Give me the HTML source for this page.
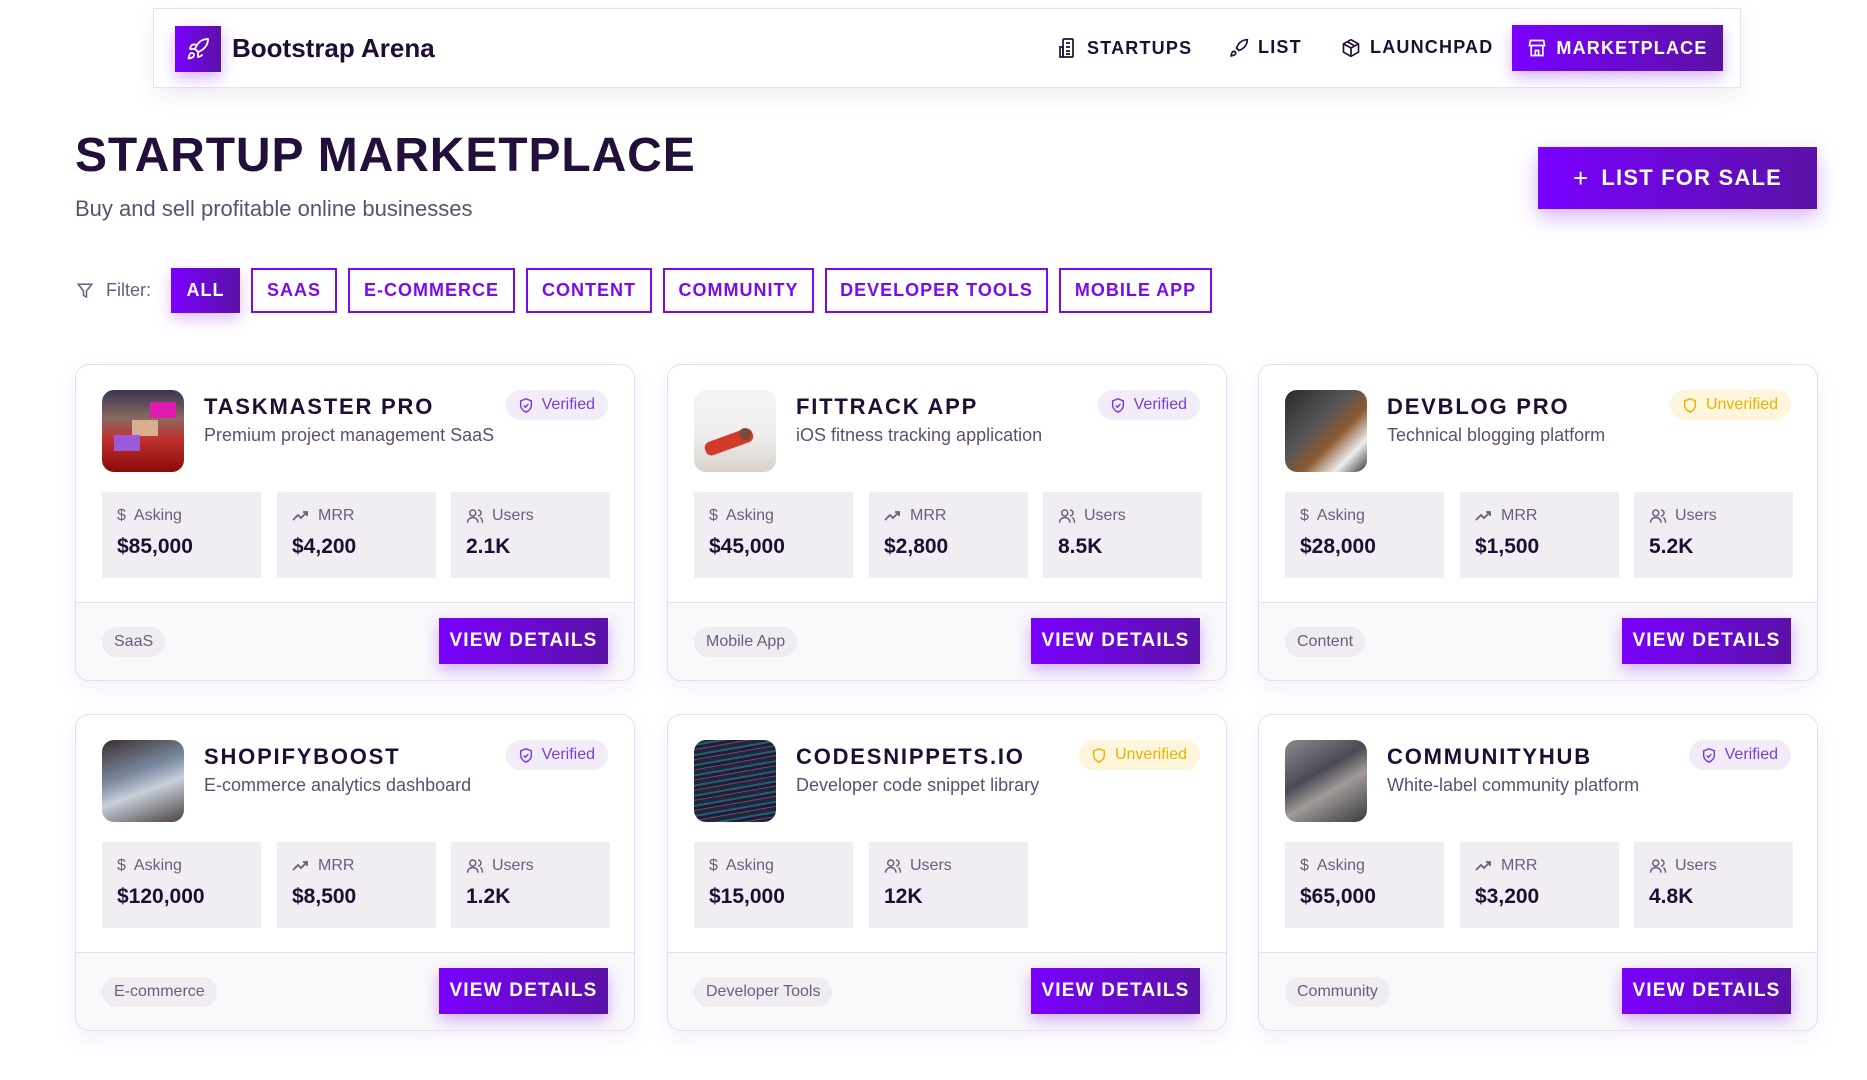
<!DOCTYPE html>
<html><head><meta charset="utf-8"><style>
*{box-sizing:border-box;margin:0;padding:0}
body{width:1867px;height:1080px;overflow:hidden;background:#fff;font-family:"Liberation Sans",Arial,sans-serif;color:#1e0e33;position:relative}
.grad{background:linear-gradient(90deg,#7a00ff,#5a12a6);color:#fff}
.nav{position:absolute;left:153px;top:8px;width:1588px;height:80px;border:1px solid #e6e3ea;background:#fff;box-shadow:0 8px 20px rgba(60,40,90,.08)}
.logo{position:absolute;left:21px;top:17px;width:46px;height:46px;box-shadow:0 6px 14px rgba(122,0,255,.3);display:flex;align-items:center;justify-content:center}
.brand{position:absolute;left:78px;top:24px;font-size:26px;font-weight:600;color:#1e0e33}
.ni{position:absolute;top:28px;font-size:18px;font-weight:700;letter-spacing:1.2px;display:flex;align-items:center;gap:9px;color:#1e0e33}
.mk{position:absolute;left:1358px;top:16px;width:211px;height:46px;display:flex;align-items:center;justify-content:center;gap:9px;font-size:18px;font-weight:700;letter-spacing:1.2px;box-shadow:0 6px 14px rgba(122,0,255,.3)}
h1{position:absolute;left:75px;top:128px;font-size:48px;font-weight:700;letter-spacing:0.9px;color:#22103a}
.sub{position:absolute;left:75px;top:196px;font-size:22px;color:#5e4f70}
.sale{position:absolute;left:1538px;top:147px;width:279px;height:62px;display:flex;align-items:center;justify-content:center;gap:12px;font-size:22px;font-weight:700;letter-spacing:1.2px;box-shadow:0 8px 20px rgba(122,0,255,.3)}
.filter{position:absolute;left:76px;top:268px;height:45px;display:flex;align-items:center;font-size:18px;color:#6b5d7c}
.fb{position:absolute;top:268px;height:45px;border:2px solid #7a0bf0;color:#7a0bf0;font-size:18px;font-weight:700;letter-spacing:1px;display:flex;align-items:center;justify-content:center}
.fb.on{border:none;background:linear-gradient(90deg,#7a00ff,#5a12a6);color:#fff;box-shadow:0 6px 14px rgba(122,0,255,.25)}
.card{position:absolute;width:560px;height:317px;border:1px solid #e4e0ea;border-radius:14px;overflow:hidden;background:#fff;box-shadow:0 8px 22px rgba(122,0,255,.07)}
.img{position:absolute;left:26px;top:25px;width:82px;height:82px;border-radius:12px;overflow:hidden}
.tt{position:absolute;left:128px;top:29px;font-size:22px;font-weight:700;letter-spacing:1.8px;color:#1e0e33}
.ds{position:absolute;left:128px;top:60px;font-size:18px;color:#5e4f70}
.bd{position:absolute;right:26px;top:25px;height:30px;border-radius:15px;padding:0 13px 0 12px;display:flex;align-items:center;gap:8px;font-size:16px}
.v{background:#f1ecf8;color:#7a3fd0}
.u{background:#fdf5dc;color:#e8b400}
.st{position:absolute;top:127px;width:159px;height:86px;background:#f0eef2;padding:13px 15px}
.sl{font-size:16px;color:#6b5d7c;display:flex;align-items:center;gap:8px;height:22px}
.sv{font-size:21px;font-weight:700;margin-top:8px;color:#1e0e33}
.ft{position:absolute;left:0;right:0;top:237px;bottom:0;background:#f9f8fa;border-top:1px solid #e4e0ea}
.tag{position:absolute;left:26px;top:24px;height:30px;padding:0 12px;border-radius:15px;background:#efedf1;color:#6b5d7c;font-size:16px;display:flex;align-items:center}
.vd{position:absolute;right:26px;top:15px;width:169px;height:46px;display:flex;align-items:center;justify-content:center;font-size:19px;font-weight:700;letter-spacing:1.2px;box-shadow:0 6px 14px rgba(122,0,255,.3)}
</style></head><body>
<div class="nav">
 <div class="logo grad"><svg width="24" height="24" viewBox="0 0 24 24" fill="none" stroke="#fff" stroke-width="1.8" stroke-linecap="round" stroke-linejoin="round"><path d="M4.5 16.5c-1.5 1.3-2 5-2 5s3.7-.5 5-2c.7-.8.7-2.1-.1-2.9a2.2 2.2 0 0 0-2.9-.1z"/><path d="M12 15l-3-3a22 22 0 0 1 2-4A13 13 0 0 1 22 2c0 2.7-.8 7.5-6 11a22 22 0 0 1-4 2z"/><path d="M9 12H4s.6-3 2-4c1.6-1.1 5 0 5 0M12 15v5s3-.6 4-2c1.1-1.600-5 0-5"/></svg></div>
 <div class="brand">Bootstrap Arena</div>
 <div class="ni" style="left:904px"><svg width="20" height="22" viewBox="0 0 20 22" fill="none" stroke="#1e0e33" stroke-width="1.7"><rect x="5" y="2" width="10" height="18" rx="1"/><path d="M2 10h3v10H2zM8 6h4M8 10h4M8 14h4M8 17h4"/></svg>STARTUPS</div>
 <div class="ni" style="left:1075px"><svg width="20" height="20" viewBox="0 0 24 24" fill="none" stroke="#1e0e33" stroke-width="2" stroke-linecap="round"><path d="M4.5 16.5c-1.5 1.3-2 5-2 5s3.7-.5 5-2c.7-.8.7-2.1-.1-2.9a2.2 2.2 0 0 0-2.9-.1z"/><path d="M12 15l-3-3a22 22 0 0 1 2-4A13 13 0 0 1 22 2c0 2.7-.8 7.5-6 11a22 22 0 0 1-4 2z"/></svg>LIST</div>
 <div class="ni" style="left:1187px"><svg width="20" height="20" viewBox="0 0 24 24" fill="none" stroke="#1e0e33" stroke-width="2" stroke-linejoin="round"><path d="M12 2l9 5v10l-9 5-9-5V7z"/><path d="M3 7l9 5 9-5M12 12v10M7.5 4.5l9 5"/></svg>LAUNCHPAD</div>
 <div class="mk grad"><svg width="20" height="20" viewBox="0 0 24 24" fill="none" stroke="#fff" stroke-width="2"><path d="M4 3h16l1 6H3z"/><path d="M5 9v12h14V9M10 21v-6h4v6"/></svg>MARKETPLACE</div>
</div>
<h1>STARTUP MARKETPLACE</h1>
<div class="sub">Buy and sell profitable online businesses</div>
<div class="sale grad"><span style="font-weight:300;font-size:26px">+</span>LIST FOR SALE</div>
<div class="filter"><svg width="18" height="20" viewBox="0 0 24 24" fill="none" stroke="#6b5d7c" stroke-width="2"><path d="M3 3h18l-7 9v8l-4-2v-6z"/></svg><span style="margin-left:12px">Filter:</span></div>
<div class="fb on" style="left:171px;width:69px">ALL</div>
<div class="fb" style="left:251px;width:86px">SAAS</div>
<div class="fb" style="left:348px;width:167px">E-COMMERCE</div>
<div class="fb" style="left:526px;width:126px">CONTENT</div>
<div class="fb" style="left:663px;width:151px">COMMUNITY</div>
<div class="fb" style="left:825px;width:223px">DEVELOPER TOOLS</div>
<div class="fb" style="left:1059px;width:153px">MOBILE APP</div>

<div class="card" style="left:75px;top:364px">
 <div class="img" style="background:linear-gradient(180deg,#3a3550 0%,#8a6b60 35%,#c03030 60%,#8a0a0a 100%)"><div style="position:absolute;left:48px;top:12px;width:26px;height:16px;background:#e01cb0"></div><div style="position:absolute;left:30px;top:30px;width:26px;height:16px;background:#d8b090"></div><div style="position:absolute;left:12px;top:45px;width:26px;height:16px;background:#9b58d8"></div></div>
 <div class="tt">TASKMASTER PRO</div><div class="ds">Premium project management SaaS</div>
 <div class="bd v"><svg width="16" height="17" viewBox="0 0 24 24" fill="none" stroke="currentColor" stroke-width="2.2"><path d="M12 2l8 3v7c0 5-4 8-8 10-4-2-8-5-8-10V5z"/><path d="M8.5 12l2.5 2.5 4.5-4.5"/></svg>Verified</div>
 <div class="st" style="left:26px"><div class="sl">$&nbsp; Asking</div><div class="sv">$85,000</div></div>
 <div class="st" style="left:201px"><div class="sl"><svg width="18" height="12" viewBox="0 0 18 12" fill="none" stroke="#6b5d7c" stroke-width="1.8"><path d="M1 10l5-5 3 3 6-6M11 2h4v4"/></svg>MRR</div><div class="sv">$4,200</div></div>
 <div class="st" style="left:375px"><div class="sl"><svg width="18" height="18" viewBox="0 0 24 24" fill="none" stroke="#6b5d7c" stroke-width="2"><circle cx="9" cy="8" r="4"/><path d="M2 21c0-4 3-7 7-7s7 3 7 7M16 4a4 4 0 0 1 0 8M19 14c2 1 3 4 3 7"/></svg>Users</div><div class="sv">2.1K</div></div>
 <div class="ft"><div class="tag">SaaS</div><div class="vd grad">VIEW DETAILS</div></div>
</div>

<div class="card" style="left:667px;top:364px">
 <div class="img" style="background:linear-gradient(180deg,#f4f4f4 0%,#eee 55%,#d8d2cc 100%)"><div style="position:absolute;left:10px;top:45px;width:50px;height:14px;background:#d43a2a;border-radius:6px;transform:rotate(-20deg)"></div><div style="position:absolute;left:45px;top:38px;width:12px;height:12px;background:#7a4a3a;border-radius:50%"></div></div>
 <div class="tt">FITTRACK APP</div><div class="ds">iOS fitness tracking application</div>
 <div class="bd v"><svg width="16" height="17" viewBox="0 0 24 24" fill="none" stroke="currentColor" stroke-width="2.2"><path d="M12 2l8 3v7c0 5-4 8-8 10-4-2-8-5-8-10V5z"/><path d="M8.5 12l2.5 2.5 4.5-4.5"/></svg>Verified</div>
 <div class="st" style="left:26px"><div class="sl">$&nbsp; Asking</div><div class="sv">$45,000</div></div>
 <div class="st" style="left:201px"><div class="sl"><svg width="18" height="12" viewBox="0 0 18 12" fill="none" stroke="#6b5d7c" stroke-width="1.8"><path d="M1 10l5-5 3 3 6-6M11 2h4v4"/></svg>MRR</div><div class="sv">$2,800</div></div>
 <div class="st" style="left:375px"><div class="sl"><svg width="18" height="18" viewBox="0 0 24 24" fill="none" stroke="#6b5d7c" stroke-width="2"><circle cx="9" cy="8" r="4"/><path d="M2 21c0-4 3-7 7-7s7 3 7 7M16 4a4 4 0 0 1 0 8M19 14c2 1 3 4 3 7"/></svg>Users</div><div class="sv">8.5K</div></div>
 <div class="ft"><div class="tag">Mobile App</div><div class="vd grad">VIEW DETAILS</div></div>
</div>

<div class="card" style="left:1258px;top:364px">
 <div class="img" style="background:linear-gradient(135deg,#2a2a2a 0%,#555 40%,#8a5a30 60%,#eee 80%,#333 100%)"></div>
 <div class="tt">DEVBLOG PRO</div><div class="ds">Technical blogging platform</div>
 <div class="bd u"><svg width="16" height="17" viewBox="0 0 24 24" fill="none" stroke="currentColor" stroke-width="2.2"><path d="M12 2l8 3v7c0 5-4 8-8 10-4-2-8-5-8-10V5z"/></svg>Unverified</div>
 <div class="st" style="left:26px"><div class="sl">$&nbsp; Asking</div><div class="sv">$28,000</div></div>
 <div class="st" style="left:201px"><div class="sl"><svg width="18" height="12" viewBox="0 0 18 12" fill="none" stroke="#6b5d7c" stroke-width="1.8"><path d="M1 10l5-5 3 3 6-6M11 2h4v4"/></svg>MRR</div><div class="sv">$1,500</div></div>
 <div class="st" style="left:375px"><div class="sl"><svg width="18" height="18" viewBox="0 0 24 24" fill="none" stroke="#6b5d7c" stroke-width="2"><circle cx="9" cy="8" r="4"/><path d="M2 21c0-4 3-7 7-7s7 3 7 7M16 4a4 4 0 0 1 0 8M19 14c2 1 3 4 3 7"/></svg>Users</div><div class="sv">5.2K</div></div>
 <div class="ft"><div class="tag">Content</div><div class="vd grad">VIEW DETAILS</div></div>
</div>

<div class="card" style="left:75px;top:714px">
 <div class="img" style="background:linear-gradient(160deg,#3a2e2e 0%,#7a8aa0 40%,#c8d0dc 60%,#4a4040 100%)"></div>
 <div class="tt">SHOPIFYBOOST</div><div class="ds">E-commerce analytics dashboard</div>
 <div class="bd v"><svg width="16" height="17" viewBox="0 0 24 24" fill="none" stroke="currentColor" stroke-width="2.2"><path d="M12 2l8 3v7c0 5-4 8-8 10-4-2-8-5-8-10V5z"/><path d="M8.5 12l2.5 2.5 4.5-4.5"/></svg>Verified</div>
 <div class="st" style="left:26px"><div class="sl">$&nbsp; Asking</div><div class="sv">$120,000</div></div>
 <div class="st" style="left:201px"><div class="sl"><svg width="18" height="12" viewBox="0 0 18 12" fill="none" stroke="#6b5d7c" stroke-width="1.8"><path d="M1 10l5-5 3 3 6-6M11 2h4v4"/></svg>MRR</div><div class="sv">$8,500</div></div>
 <div class="st" style="left:375px"><div class="sl"><svg width="18" height="18" viewBox="0 0 24 24" fill="none" stroke="#6b5d7c" stroke-width="2"><circle cx="9" cy="8" r="4"/><path d="M2 21c0-4 3-7 7-7s7 3 7 7M16 4a4 4 0 0 1 0 8M19 14c2 1 3 4 3 7"/></svg>Users</div><div class="sv">1.2K</div></div>
 <div class="ft"><div class="tag">E-commerce</div><div class="vd grad">VIEW DETAILS</div></div>
</div>

<div class="card" style="left:667px;top:714px">
 <div class="img" style="background:repeating-linear-gradient(170deg,#1a2a3a 0 4px,#2a5a7a 4px 6px,#1a2030 6px 9px,#8a3a6a 9px 10px)"></div>
 <div class="tt">CODESNIPPETS.IO</div><div class="ds">Developer code snippet library</div>
 <div class="bd u"><svg width="16" height="17" viewBox="0 0 24 24" fill="none" stroke="currentColor" stroke-width="2.2"><path d="M12 2l8 3v7c0 5-4 8-8 10-4-2-8-5-8-10V5z"/></svg>Unverified</div>
 <div class="st" style="left:26px"><div class="sl">$&nbsp; Asking</div><div class="sv">$15,000</div></div>
 <div class="st" style="left:201px"><div class="sl"><svg width="18" height="18" viewBox="0 0 24 24" fill="none" stroke="#6b5d7c" stroke-width="2"><circle cx="9" cy="8" r="4"/><path d="M2 21c0-4 3-7 7-7s7 3 7 7M16 4a4 4 0 0 1 0 8M19 14c2 1 3 4 3 7"/></svg>Users</div><div class="sv">12K</div></div>
 <div class="ft"><div class="tag">Developer Tools</div><div class="vd grad">VIEW DETAILS</div></div>
</div>

<div class="card" style="left:1258px;top:714px">
 <div class="img" style="background:linear-gradient(150deg,#8a8a90 0%,#4a4a55 40%,#a09a98 60%,#3a3a40 100%)"></div>
 <div class="tt">COMMUNITYHUB</div><div class="ds">White-label community platform</div>
 <div class="bd v"><svg width="16" height="17" viewBox="0 0 24 24" fill="none" stroke="currentColor" stroke-width="2.2"><path d="M12 2l8 3v7c0 5-4 8-8 10-4-2-8-5-8-10V5z"/><path d="M8.5 12l2.5 2.5 4.5-4.5"/></svg>Verified</div>
 <div class="st" style="left:26px"><div class="sl">$&nbsp; Asking</div><div class="sv">$65,000</div></div>
 <div class="st" style="left:201px"><div class="sl"><svg width="18" height="12" viewBox="0 0 18 12" fill="none" stroke="#6b5d7c" stroke-width="1.8"><path d="M1 10l5-5 3 3 6-6M11 2h4v4"/></svg>MRR</div><div class="sv">$3,200</div></div>
 <div class="st" style="left:375px"><div class="sl"><svg width="18" height="18" viewBox="0 0 24 24" fill="none" stroke="#6b5d7c" stroke-width="2"><circle cx="9" cy="8" r="4"/><path d="M2 21c0-4 3-7 7-7s7 3 7 7M16 4a4 4 0 0 1 0 8M19 14c2 1 3 4 3 7"/></svg>Users</div><div class="sv">4.8K</div></div>
 <div class="ft"><div class="tag">Community</div><div class="vd grad">VIEW DETAILS</div></div>
</div>
</body></html>
